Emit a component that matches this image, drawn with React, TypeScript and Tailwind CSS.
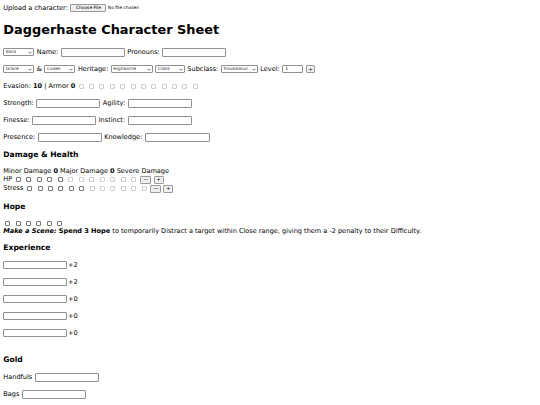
import type { ReactNode } from "react";

const Field = ({ w }: { w: string }) => (
	<input type="text" className={`${w} h-[9px] border border-[#8f8f8f] rounded-[1px] bg-white outline-none`} />
);

const Picker = ({ label, w }: { label: string; w: string }) => (
	<span className={`${w} h-[8px] border border-[#8f8f8f] rounded-[1px] bg-white flex items-center justify-between pl-[1.5px] pr-[1px]`}>
		<span className="text-[4.4px] leading-none text-[#333] truncate">{label}</span>
		<svg width="4" height="3" viewBox="0 0 8 5" className="shrink-0">
			<path d="M1 1 L4 4 L7 1" fill="none" stroke="#222" strokeWidth="1.3" />
		</svg>
	</span>
);

const Box = ({ on }: { on?: boolean }) => (
	<input
		type="checkbox"
		disabled={!on}
		className={`appearance-none w-[5px] h-[5px] shrink-0 rounded-[1px] border bg-white ${on ? "border-[#767676]" : "border-[#cdcdcd]"}`}
	/>
);

const Btn = ({ children, w }: { children: ReactNode; w: string }) => (
	<button className={`${w} h-[7.5px] border border-[#9a9a9a] rounded-[1px] bg-[#efefef] flex items-center justify-center text-[5px] leading-none`}>
		{children}
	</button>
);

const Row = ({ children, className = "" }: { children: ReactNode; className?: string }) => (
	<div className={`flex items-center gap-[2.5px] h-[10px] mt-[7px] ${className}`}>{children}</div>
);

const H3 = ({ children, className = "" }: { children: ReactNode; className?: string }) => (
	<h3 className={`h-[10px] flex items-center text-[7.6px] font-bold ${className}`}>{children}</h3>
);

export default function App() {
	const armor = Array.from({ length: 12 });
	const hp = Array.from({ length: 12 }, (_, i) => i < 5);
	const stress = Array.from({ length: 12 }, (_, i) => i < 6);

	return (
		<div className="min-h-[405px] w-[540px] bg-white text-black px-[3.3px] pt-[3px] text-[6.55px] leading-none font-['DejaVu_Sans',Verdana,sans-serif]">
			<div className="flex items-center h-[10px] gap-[2.5px]">
				<span>Upload a character:</span>
				<span className="w-[36px] h-[8px] border border-[#9a9a9a] rounded-[1px] bg-[#efefef] flex items-center justify-center text-[4.4px]">
					Choose File
				</span>
				<span className="text-[4.4px] -ml-[1px]">No file chosen</span>
			</div>

			<h1 className="mt-[10.5px] h-[14px] flex items-center text-[12.9px] font-bold">Daggerhaste Character Sheet</h1>

			<Row className="mt-[9.5px]">
				<Picker label="Bard" w="w-[31px]" />
				<span>Name:</span>
				<Field w="w-[64px]" />
				<span>Pronouns:</span>
				<Field w="w-[64px]" />
			</Row>

			<Row>
				<Picker label="Grace" w="w-[31px]" />
				<span>&amp;</span>
				<Picker label="Codex" w="w-[31px]" />
				<span>Heritage:</span>
				<Picker label="Highborne" w="w-[42px]" />
				<Picker label="Clank" w="w-[29.5px]" />
				<span>Subclass:</span>
				<Picker label="Troubadour" w="w-[37px]" />
				<span>Level:</span>
				<span className="w-[21px] h-[8px] border border-[#8f8f8f] rounded-[1px] bg-white flex items-center pl-[2px] text-[4.4px]">1</span>
				<Btn w="w-[9.5px]">+</Btn>
			</Row>

			<Row>
				<span>
					Evasion: <b>10</b> | Armor <b>0</b>
				</span>
				<div className="flex items-center gap-[5.4px] ml-[0.8px]">
					{armor.map((_, i) => (
						<Box key={i} />
					))}
				</div>
			</Row>

			<Row>
				<span>Strength:</span>
				<Field w="w-[64px]" />
				<span>Agility:</span>
				<Field w="w-[64.5px]" />
			</Row>
			<Row>
				<span>Finesse:</span>
				<Field w="w-[64px]" />
				<span>Instinct:</span>
				<Field w="w-[64px]" />
			</Row>
			<Row>
				<span>Presence:</span>
				<Field w="w-[64px]" />
				<span>Knowledge:</span>
				<Field w="w-[65px]" />
			</Row>

			<H3 className="mt-[8px]">Damage &amp; Health</H3>
			<div className="mt-[7px]">
				<div className="h-[8px] flex items-center">
					<span>
						Minor Damage <b>0</b> Major Damage <b>0</b> Severe Damage
					</span>
				</div>
				<div className="h-[8.5px] flex items-center">
					<span>HP</span>
					<div className="flex items-center gap-[5.5px] ml-[3.8px]">
						{hp.map((on, i) => (
							<Box key={i} on={on} />
						))}
					</div>
					<div className="flex items-center gap-[2.5px] ml-[3.7px] mt-[1px]">
						<Btn w="w-[11px]">—</Btn>
						<Btn w="w-[10px]">+</Btn>
					</div>
				</div>
				<div className="h-[9px] flex items-center">
					<span>Stress</span>
					<div className="flex items-center gap-[5.4px] ml-[3.8px]">
						{stress.map((on, i) => (
							<Box key={i} on={on} />
						))}
					</div>
					<div className="flex items-center gap-[2px] ml-[3.4px] mt-[1.5px]">
						<Btn w="w-[11.5px]">—</Btn>
						<Btn w="w-[10px]">+</Btn>
					</div>
				</div>
			</div>

			<H3 className="mt-[9.5px]">Hope</H3>
			<div className="mt-[7px] h-[8px] flex items-center gap-[5.4px] pl-[1.9px]">
				{Array.from({ length: 6 }).map((_, i) => (
					<Box key={i} on />
				))}
			</div>
			<p className="h-[9.5px] flex items-center">
				<span>
					<b>
						<i>Make a Scene:</i> Spend 3 Hope
					</b>{" "}
					to temporarily Distract a target within Close range, giving them a -2 penalty to their Difficulty.
				</span>
			</p>

			<H3 className="mt-[6.5px]">Experience</H3>
			{["+2", "+2", "+0", "+0", "+0"].map((v, i) => (
				<div key={i} className="flex items-center h-[10px] mt-[7px]">
					<input type="text" className="w-[64px] h-[8.5px] border border-[#8f8f8f] rounded-[1px] bg-white outline-none" />
					<span className="ml-[0.8px]">{v}</span>
				</div>
			))}

			<H3 className="mt-[17px]">Gold</H3>
			<Row>
				<span>Handfuls</span>
				<Field w="w-[64px]" />
			</Row>
			<Row className="mt-[7.5px]">
				<span>Bags</span>
				<Field w="w-[64px]" />
			</Row>
		</div>
	);
}
